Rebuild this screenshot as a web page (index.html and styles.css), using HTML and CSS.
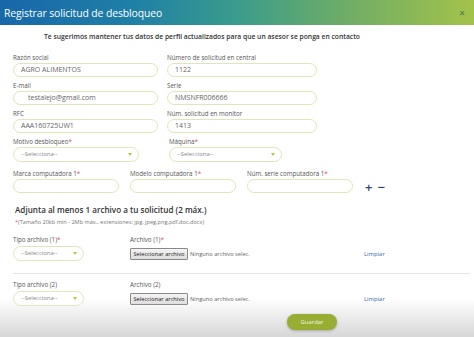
FILE: index.html
```html
<!DOCTYPE html>
<html lang="es">
<head>
<meta charset="utf-8">
<title>Registrar solicitud de desbloqueo</title>
<link rel="stylesheet" href="styles.css">
</head>
<body>
<div class="modal">
  <header class="modal-header">
    <h1 class="modal-title">Registrar solicitud de desbloqueo</h1>
    <span class="close">×</span>
  </header>
  <p class="hint">Te sugerimos mantener tus datos de perfil actualizados para que un asesor se ponga en contacto</p>

  <div class="grid-two">
    <div class="field">
      <label class="lbl">Razón social</label>
      <div class="input w145">AGRO ALIMENTOS</div>
    </div>
    <div class="field">
      <label class="lbl">Número de solicitud en central</label>
      <div class="input w150">1122</div>
    </div>
    <div class="field">
      <label class="lbl">E-mail</label>
      <div class="input w145 indent">testalejo@gmail.com</div>
    </div>
    <div class="field">
      <label class="lbl">Serie</label>
      <div class="input w150">NMSNFR006666</div>
    </div>
    <div class="field">
      <label class="lbl">RFC</label>
      <div class="input w145">AAA160725UW1</div>
    </div>
    <div class="field">
      <label class="lbl">Núm. solicitud en monitor</label>
      <div class="input w150">1413</div>
    </div>
  </div>

  <div class="row-selects">
    <div class="field">
      <label class="lbl">Motivo desbloqueo<span class="req">*</span></label>
      <div class="select w126">--Selecciona--<span class="caret"></span></div>
    </div>
    <div class="field">
      <label class="lbl">Máquina<span class="req">*</span></label>
      <div class="select w113">--Selecciona--<span class="caret"></span></div>
    </div>
  </div>

  <div class="row-computer">
    <div class="field">
      <label class="lbl">Marca computadora 1<span class="req">*</span></label>
      <div class="input w106"></div>
    </div>
    <div class="field">
      <label class="lbl">Modelo computadora 1<span class="req">*</span></label>
      <div class="input w106"></div>
    </div>
    <div class="field">
      <label class="lbl">Núm. serie computadora 1<span class="req">*</span></label>
      <div class="input w106"></div>
    </div>
    <div class="pm"><span class="plus">+</span><span class="minus">−</span></div>
  </div>

  <h2 class="attach-title">Adjunta al menos 1 archivo a tu solicitud (2 máx.)</h2>
  <p class="attach-note"><span class="req">*</span>(Tamaño 20kb min - 2Mb máx., extensiones: jpg, jpeg,png,pdf,doc,docx)</p>

  <div class="attach-row first">
    <label class="lbl">Tipo archivo (1)<span class="req">*</span></label>
    <label class="lbl">Archivo (1)<span class="req">*</span></label>
    <span></span>
    <div class="select w71">--Selecciona--<span class="caret"></span></div>
    <div class="file"><span class="file-btn">Seleccionar archivo</span><span class="file-name">Ninguno archivo selec.</span></div>
    <a class="clear">Limpiar</a>
  </div>
  <div class="divider"></div>
  <div class="attach-row second">
    <label class="lbl">Tipo archivo (2)</label>
    <label class="lbl">Archivo (2)</label>
    <span></span>
    <div class="select w71">--Selecciona--<span class="caret"></span></div>
    <div class="file"><span class="file-btn">Seleccionar archivo</span><span class="file-name">Ninguno archivo selec.</span></div>
    <a class="clear">Limpiar</a>
  </div>

  <div class="footer">
    <button class="save">Guardar</button>
  </div>
</div>
</body>
</html>
```
FILE: styles.css
```css
* { box-sizing: border-box; }
html, body { margin: 0; padding: 0; }
body {
  width: 474px;
  height: 337px;
  overflow: hidden;
  font-family: "Open Sans", "Liberation Sans", sans-serif;
  color: #444;
  background: linear-gradient(to bottom, #ffffff 0, #ffffff 298px, #d7d7d7 337px);
}
.modal { width: 474px; }
.modal-header {
  height: 25px;
  display: flex;
  align-items: center;
  justify-content: space-between;
  padding: 0 9px 0 4px;
  background: linear-gradient(to right, #1767a9 0%, #1f80a6 28%, #3a9c8c 50%, #6dac68 72%, #a3c24a 100%);
}
.modal-title {
  margin: 0;
  font-size: 10.4px;
  font-weight: 400;
  color: #fff;
  letter-spacing: -0.1px;
}
.close { color: #4f6f50; font-size: 10px; }
.hint {
  margin: 7px 0 0 44px;
  font-size: 6.75px;
  line-height: 10px;
  font-weight: 600;
  color: #333;
}
.field { display: flex; flex-direction: column; }
.lbl {
  display: block;
  font-size: 6.2px;
  line-height: 8px;
  color: #555;
  margin-bottom: 1px;
  white-space: nowrap;
}
.req { color: #e0506a; }
.input, .select {
  height: 14px;
  border: 1px solid #e1e6b8;
  border-radius: 8px;
  font-size: 7px;
  line-height: 12px;
  color: #666;
  padding-left: 7px;
  background: #fff;
}
.indent { padding-left: 14px; }
.w145 { width: 145px; }
.w150 { width: 150px; }
.w126 { width: 126px; }
.w113 { width: 113px; }
.w106 { width: 106px; }
.w71 { width: 71px; }
.grid-two {
  margin: 12px 0 0 13px;
  display: grid;
  grid-template-columns: 145px 150px;
  column-gap: 9px;
  row-gap: 5px;
}
.select {
  position: relative;
  height: 15px;
  font-size: 5.9px;
  line-height: 13px;
  color: #888;
}
.caret {
  position: absolute;
  right: 6px;
  top: 5px;
  width: 0; height: 0;
  border-left: 2.5px solid transparent;
  border-right: 2.5px solid transparent;
  border-top: 3px solid #b8c640;
}
.row-selects {
  margin: 5px 0 0 13px;
  display: flex;
  gap: 30px;
}
.row-computer {
  margin: 8px 0 0 13px;
  display: flex;
  gap: 11px;
  align-items: flex-end;
}
.pm {
  display: flex;
  gap: 5px;
  align-items: center;
  height: 16px;
  margin-left: 1px;
  margin-bottom: -2px;
  color: #2a4573;
  font-size: 13px;
  line-height: 16px;
  font-weight: 600;
}
.attach-title {
  margin: 11px 0 0 15px;
  font-size: 8.1px;
  line-height: 12px;
  font-weight: 600;
  color: #333;
}
.attach-note {
  margin: 2.5px 0 0 15px;
  font-size: 5.6px;
  line-height: 7px;
  color: #777;
}
.attach-row {
  margin: 10.5px 0 0 13px;
  display: grid;
  grid-template-columns: 117px 234px auto;
  align-items: center;
}
.attach-row.second { margin-top: 7px; }
.attach-row .lbl { margin-bottom: 2px; align-self: end; }
.file { display: flex; align-items: center; }
.file-btn {
  height: 12px;
  width: 58px;
  border: 1px solid #8a8a8a;
  border-radius: 1px;
  background: linear-gradient(#f4f4f4, #dedede);
  font-size: 5.7px;
  line-height: 10px;
  color: #222;
  text-align: center;
  white-space: nowrap;
}
.file-name {
  margin-left: 2px;
  font-size: 5.7px;
  color: #666;
  white-space: nowrap;
}
.clear {
  font-size: 5.9px;
  color: #3a6aae;
}
.divider {
  height: 1px;
  background: #e6e6e6;
  margin: 12px 4px 0 13px;
}
.footer {
  display: flex;
  justify-content: flex-start;
  padding-left: 287px;
  margin-top: 8px;
}
.save {
  width: 50px;
  height: 16px;
  border: none;
  border-radius: 8px;
  background: #98ad33;
  color: #f4f7e4;
  font-family: "Open Sans", "Liberation Sans", sans-serif;
  font-size: 5.9px;
  box-shadow: 0 1px 3px rgba(0,0,0,0.25);
  padding: 0;
}
```
